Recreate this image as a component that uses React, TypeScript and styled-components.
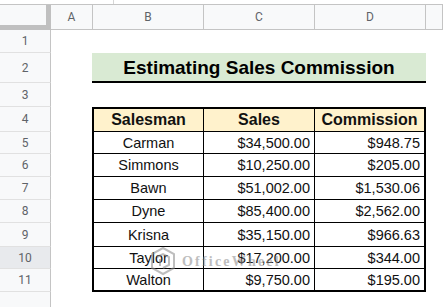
import styled, { createGlobalStyle } from "styled-components";

const GlobalStyle = createGlobalStyle`
  html, body {
    margin: 0;
    padding: 0;
    background: #ffffff;
    overflow: hidden;
  }
  * {
    box-sizing: border-box;
  }
`;

const salesData = [
  { name: "Carman", sales: "$34,500.00", commission: "$948.75", h: 22 },
  { name: "Simmons", sales: "$10,250.00", commission: "$205.00", h: 23 },
  { name: "Bawn", sales: "$51,002.00", commission: "$1,530.06", h: 23 },
  { name: "Dyne", sales: "$85,400.00", commission: "$2,562.00", h: 23 },
  { name: "Krisna", sales: "$35,150.00", commission: "$966.63", h: 24 },
  { name: "Taylor", sales: "$17,200.00", commission: "$344.00", h: 22 },
  { name: "Walton", sales: "$9,750.00", commission: "$195.00", h: 23 },
];

const Page = styled.div`
  position: relative;
  width: 443px;
  height: 307px;
  overflow: hidden;
  display: flex;
  flex-direction: column;
  font-family: "Liberation Sans", Arial, sans-serif;
  color: #000;
`;

const TopStrip = styled.div`
  height: 4px;
  flex: 0 0 4px;
  display: flex;
`;

const Tick = styled.div`
  margin-left: 113px;
  width: 1px;
  background: #d6d6d6;
`;

const HeaderRow = styled.div`
  display: flex;
  height: 26px;
  flex: 0 0 26px;
  border-top: 1px solid #c4c4c4;
  background: #f8f9fa;
`;

const Corner = styled.div`
  width: 51px;
  flex: 0 0 51px;
  border-right: 5px solid #c0c0c0;
  border-bottom: 5px solid #c0c0c0;
`;

const ColHead = styled.div<{ $w?: number }>`
  ${({ $w }) => ($w ? `width: ${$w}px; flex: 0 0 ${$w}px;` : "flex: 1;")}
  display: flex;
  align-items: center;
  justify-content: center;
  border-right: 1px solid #c4c4c4;
  border-bottom: 1px solid #c4c4c4;
  font-family: Roboto, "Liberation Sans", sans-serif;
  font-size: 12px;
  color: #5f6368;
`;

const SheetRow = styled.div<{ $h: number }>`
  display: flex;
  height: ${({ $h }) => $h}px;
  flex: 0 0 ${({ $h }) => $h}px;
`;

const RowNum = styled.div<{ $active?: boolean }>`
  width: 51px;
  flex: 0 0 51px;
  display: flex;
  align-items: center;
  justify-content: center;
  background: ${({ $active }) => ($active ? "#e8eaed" : "#f8f9fa")};
  border-right: 1px solid #c4c4c4;
  border-bottom: 1px solid #e1e1e1;
  font-family: Roboto, "Liberation Sans", sans-serif;
  font-size: 12px;
  color: #5f6368;
`;

const Filler = styled.div`
  flex: 1;
  display: flex;
`;

const FillerNum = styled.div`
  width: 51px;
  background: #f8f9fa;
  border-right: 1px solid #c4c4c4;
`;

const Spacer = styled.div`
  width: 41px;
  flex: 0 0 41px;
`;

const Title = styled.div`
  width: 334px;
  flex: 0 0 334px;
  display: flex;
  align-items: center;
  justify-content: center;
  background: #d9ead3;
  border-bottom: 2px solid #000;
  font-size: 19px;
  font-weight: bold;
  padding-top: 1px;
`;

const TableRow = styled.div<{ $head?: boolean; $last?: boolean }>`
  display: flex;
  width: 334px;
  flex: 0 0 334px;
  background: ${({ $head }) => ($head ? "#fff2cc" : "#fff")};
  border-left: 2px solid #000;
  border-right: 2px solid #000;
  border-top: ${({ $head }) => ($head ? "2px solid #000" : "none")};
  border-bottom: ${({ $last }) => ($last ? "2px" : "1px")} solid #000;
`;

const Cell = styled.div<{ $w: number; $align: "center" | "right"; $head?: boolean; $edge?: boolean }>`
  width: ${({ $w }) => $w}px;
  flex: 0 0 ${({ $w }) => $w}px;
  display: flex;
  align-items: center;
  justify-content: ${({ $align }) => ($align === "right" ? "flex-end" : "center")};
  padding-right: ${({ $align }) => ($align === "right" ? "4px" : "0")};
  border-right: ${({ $edge }) => ($edge ? "none" : "1px solid #000")};
  font-size: ${({ $head }) => ($head ? "16px" : "14.5px")};
  font-weight: ${({ $head }) => ($head ? "bold" : "normal")};
  color: #111;
`;

const Watermark = styled.div`
  position: absolute;
  left: 150px;
  top: 246px;
  display: flex;
  align-items: center;
  gap: 6px;
  opacity: 0.55;
  pointer-events: none;
`;

const WatermarkText = styled.span`
  font-family: "Liberation Serif", serif;
  font-weight: bold;
  font-size: 14px;
  letter-spacing: 2.2px;
  color: #8a8a8a;
`;

const Logo = () => (
  <svg width="26" height="32" viewBox="0 0 26 32" fill="none" stroke="#8a8a8a" strokeWidth="2">
    <path d="M13 2 L24 8 L24 22 L13 28 L2 22 L2 8 Z" />
    <path d="M7 11 L13 8 L19 11 L19 19 L13 22" />
    <path d="M10 13 L10 20" />
  </svg>
);

const App = () => (
  <>
    <GlobalStyle />
    <Page>
      <TopStrip>
        <Tick />
      </TopStrip>
      <HeaderRow>
        <Corner />
        <ColHead $w={42}>A</ColHead>
        <ColHead $w={111}>B</ColHead>
        <ColHead $w={111}>C</ColHead>
        <ColHead $w={111}>D</ColHead>
        <ColHead />
      </HeaderRow>
      <SheetRow $h={23}>
        <RowNum>1</RowNum>
      </SheetRow>
      <SheetRow $h={30}>
        <RowNum>2</RowNum>
        <Spacer />
        <Title>Estimating Sales Commission</Title>
      </SheetRow>
      <SheetRow $h={24}>
        <RowNum>3</RowNum>
      </SheetRow>
      <SheetRow $h={25}>
        <RowNum>4</RowNum>
        <Spacer />
        <TableRow $head>
          <Cell $w={110} $align="center" $head>Salesman</Cell>
          <Cell $w={111} $align="center" $head>Sales</Cell>
          <Cell $w={109} $align="center" $head $edge>Commission</Cell>
        </TableRow>
      </SheetRow>
      {salesData.map(({ name, sales, commission, h }, i) => (
        <SheetRow $h={h} key={name}>
          <RowNum $active={i + 5 === 10}>{i + 5}</RowNum>
          <Spacer />
          <TableRow $last={i === salesData.length - 1}>
            <Cell $w={110} $align="center">{name}</Cell>
            <Cell $w={111} $align="right">{sales}</Cell>
            <Cell $w={109} $align="right" $edge>{commission}</Cell>
          </TableRow>
        </SheetRow>
      ))}
      <Filler>
        <FillerNum />
      </Filler>
      <Watermark>
        <Logo />
        <WatermarkText>OfficeWheel</WatermarkText>
      </Watermark>
    </Page>
  </>
);

export default App;
